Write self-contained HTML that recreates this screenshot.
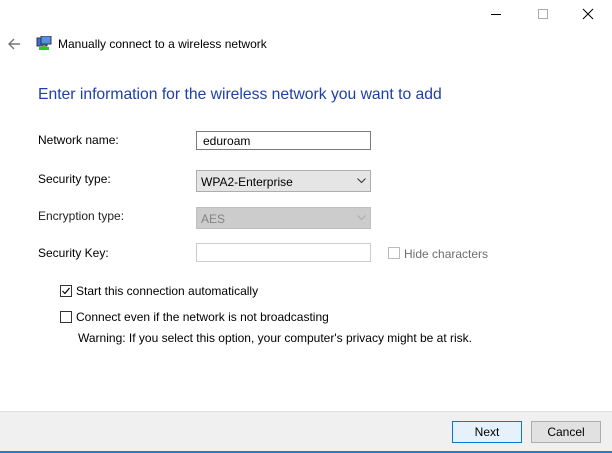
<!DOCTYPE html><html><head><style>
body{margin:0;width:612px;height:453px;background:#fff;font-family:"Liberation Sans",sans-serif;font-size:12px;color:#000;position:relative;overflow:hidden}
.a{position:absolute}
.lbl{position:absolute;left:38px}
.box{position:absolute;left:196px;width:175px;box-sizing:border-box}
.cb{position:absolute;width:12px;height:12px;border:1px solid #333;box-sizing:border-box;background:#fff}
</style></head><body>
<div class="a" style="left:491px;top:14px;width:10px;height:1px;background:#000"></div>
<div class="a" style="left:538px;top:9px;width:10px;height:10px;border:1px solid #aaa;box-sizing:border-box"></div>
<svg class="a" style="left:582px;top:8px" width="12" height="12"><path d="M1 1L11 11M11 1L1 11" stroke="#000" stroke-width="1"/></svg>
<svg class="a" style="left:7px;top:38px" width="14" height="12"><path d="M13 6H2M7 1L2 6L7 11" stroke="#777" stroke-width="1.4" fill="none"/></svg>
<svg class="a" style="left:36px;top:36px" width="16" height="16"><rect x="1" y="2" width="10" height="8" fill="#3a6fd0" stroke="#334"/><rect x="5" y="0" width="10" height="8" fill="#5a8fe0" stroke="#334"/><rect x="3" y="11" width="10" height="3" fill="#2c2"/><rect x="7" y="9" width="2" height="3" fill="#2c2"/></svg>
<div class="a" style="left:58px;top:37px;font-size:12px">Manually connect to a wireless network</div>
<div class="a" style="left:38px;top:86px;font-size:15.7px;color:#1e3fa8">Enter information for the wireless network you want to add</div>
<div class="lbl" style="top:133px">Network name:</div>
<div class="box" style="top:131px;height:19px;border:1px solid #7a7a7a;padding:2px 6px">eduroam</div>
<div class="lbl" style="top:172px">Security type:</div>
<div class="box" style="top:170px;height:22px;border:1px solid #adadad;background:#e5e5e5;padding:4px 4px">WPA2-Enterprise</div>
<svg class="a" style="left:357px;top:178px" width="9" height="6"><path d="M0.5 0.5L4.5 4.5L8.5 0.5" stroke="#333" fill="none"/></svg>
<div class="lbl" style="top:209px;color:#222">Encryption type:</div>
<div class="box" style="top:207px;height:22px;border:1px solid #bfbfbf;background:#cccccc;padding:4px 4px;color:#838383">AES</div>
<svg class="a" style="left:357px;top:215px" width="9" height="6"><path d="M0.5 0.5L4.5 4.5L8.5 0.5" stroke="#aaa" fill="none"/></svg>
<div class="lbl" style="top:246px">Security Key:</div>
<div class="box" style="top:243px;height:19px;border:1px solid #ccc"></div>
<div class="cb" style="left:388px;top:247px;border-color:#bbb"></div>
<div class="a" style="left:404px;top:247px;color:#6d6d6d">Hide characters</div>
<div class="cb" style="left:60px;top:285px"></div>
<svg class="a" style="left:61px;top:286px" width="10" height="10"><path d="M1.5 5L4 7.5L8.5 2" stroke="#000" stroke-width="1.2" fill="none"/></svg>
<div class="a" style="left:76px;top:284px">Start this connection automatically</div>
<div class="cb" style="left:60px;top:311px"></div>
<div class="a" style="left:76px;top:310px">Connect even if the network is not broadcasting</div>
<div class="a" style="left:78px;top:331px">Warning: If you select this option, your computer's privacy might be at risk.</div>
<div class="a" style="left:0;top:411px;width:612px;height:42px;background:#f0f0f0;border-top:1px solid #dfdfdf;box-sizing:border-box"></div>
<div class="a" style="left:0;top:451px;width:612px;height:2px;background:#1a7fd4"></div>
<div class="a" style="left:452px;top:421px;width:70px;height:22px;border:1px solid #0078d7;background:#e5f1fb;box-sizing:border-box;text-align:center;line-height:20px">Next</div>
<div class="a" style="left:531px;top:421px;width:70px;height:22px;border:1px solid #adadad;background:#e1e1e1;box-sizing:border-box;text-align:center;line-height:20px">Cancel</div>
</body></html>
